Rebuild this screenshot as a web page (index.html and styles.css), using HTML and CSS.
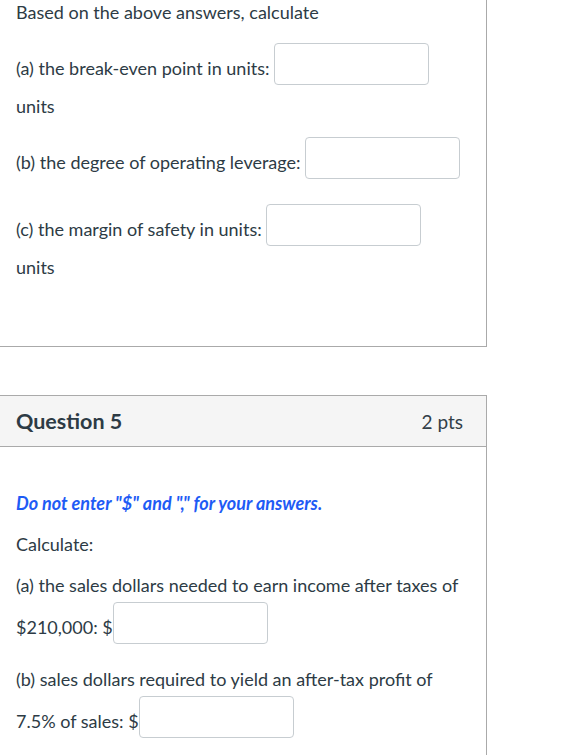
FILE: index.html
```html
<!DOCTYPE html>
<html>
<head>
<meta charset="utf-8">
<link rel="stylesheet" href="styles.css">
</head>
<body>
<div class="card card-top">
  <div class="qtext qtext-top">
    <p>Based on the above answers, calculate</p>
    <p>(a) the break-even point in units: <input class="ans" type="text"><br>units</p>
    <p>(b) the degree of operating leverage: <input class="ans" type="text"></p>
    <p>(c) the margin of safety in units: <input class="ans" type="text"><br>units</p>
  </div>
</div>

<div class="card card-q5">
  <div class="qheader">
    <span class="qname">Question 5</span>
    <span class="qpts">2 pts</span>
  </div>
  <div class="qtext qtext-q5">
    <p class="note">Do not enter "$" and "," for your answers.</p>
    <p>Calculate:</p>
    <p>(a) the sales dollars needed to earn income after taxes of $210,000: $<input class="ans" type="text"></p>
    <p>(b) sales dollars required to yield an after-tax profit of 7.5% of sales: $<input class="ans" type="text"></p>
  </div>
</div>
</body>
</html>
```

FILE: styles.css
```css
html, body {
  margin: 0;
  padding: 0;
  background: #ffffff;
}
body {
  font-family: Lato, "Open Sans", sans-serif;
  font-size: 18px;
  line-height: 27px;
  color: #2d3b45;
}
.card {
  width: 487px;
  box-sizing: border-box;
  border-right: 1px solid #aaaaaa;
}
.card-top {
  border-bottom: 1px solid #aaaaaa;
  height: 347px;
  padding-top: 1px;
}
.card-q5 {
  margin-top: 48px;
  border-top: 1px solid #aaaaaa;
  height: 362px;
}
.qtext {
  padding: 0 16px 0 16px;
}
.qtext p {
  margin: 0 0 14px 0;
}
.qtext-top p:first-child {
  margin-top: -2px;
}
.qtext-q5 {
  padding-top: 43px;
}
.ans {
  box-sizing: border-box;
  width: 155px;
  height: 42px;
  border: 1px solid #c7cdd1;
  border-radius: 4px;
  padding: 4px 8px;
  font-family: Lato, sans-serif;
  font-size: 18px;
  vertical-align: 4px;
  margin: 3px 0 8px 0;
  background: #ffffff;
}
.qheader {
  display: flex;
  justify-content: space-between;
  align-items: center;
  height: 50px;
  padding: 0 23px 0 16px;
  background: #f5f5f5;
  border-bottom: 1px solid #aaaaaa;
}
.qname {
  font-weight: 700;
  font-size: 21.5px;
}
.qpts {
  font-size: 19px;
  color: #333f48;
}
.note {
  color: #1e5bf5;
  font-weight: 700;
  font-style: italic;
}
```
